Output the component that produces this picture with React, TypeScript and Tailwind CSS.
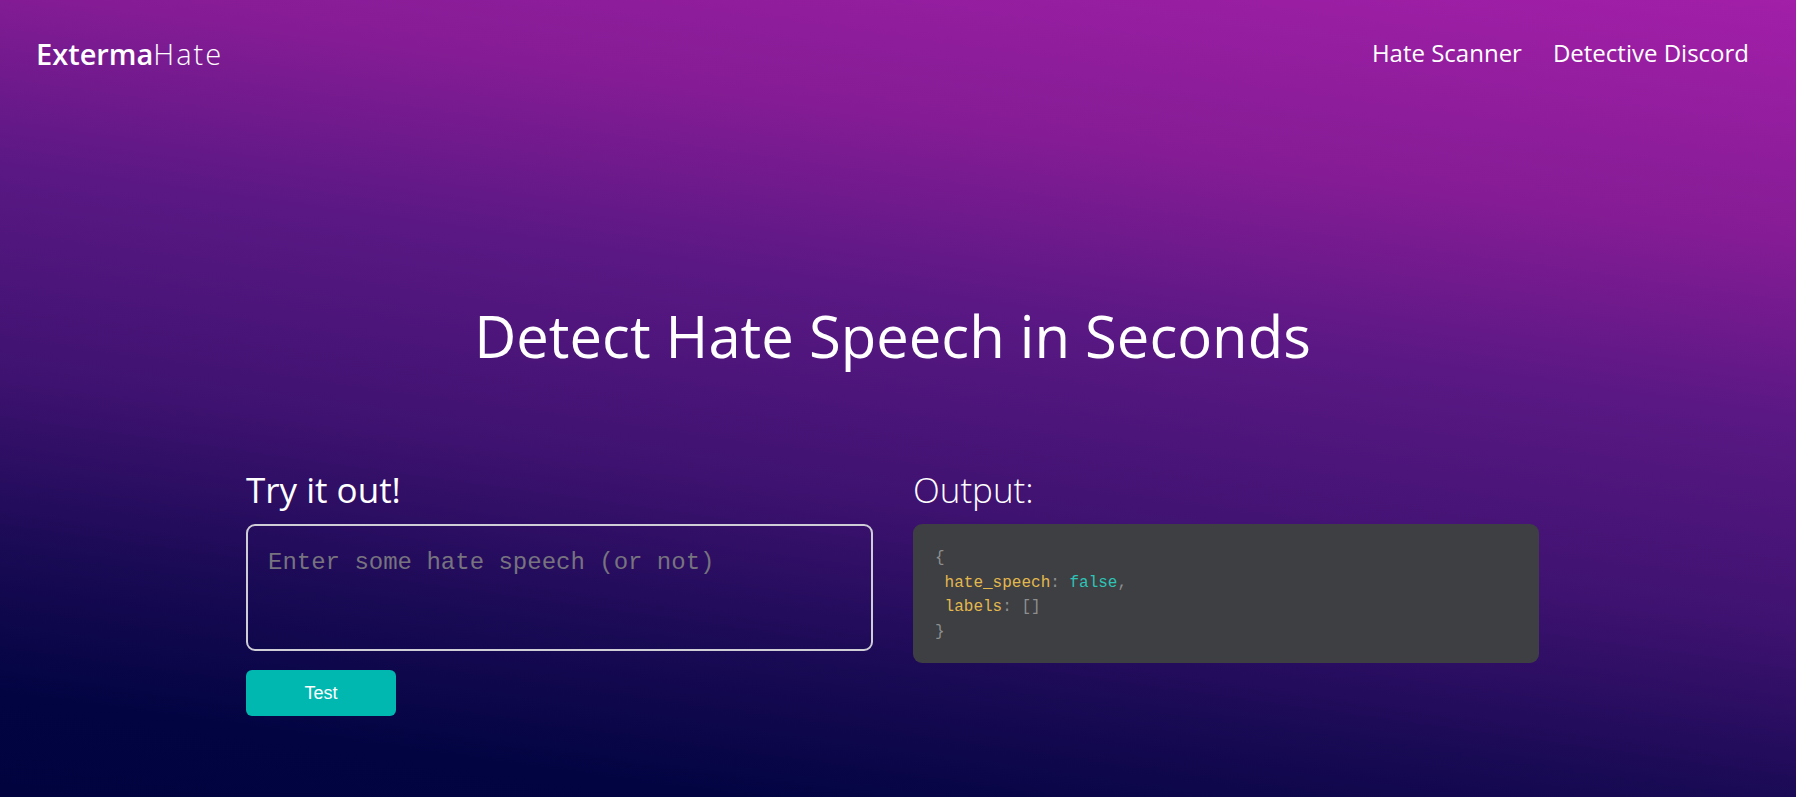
export default function App() {
  return (
    <div className="min-h-[797px] w-full bg-[linear-gradient(8deg,#01033f_0%,#020442_10%,#1a0a55_24%,#3e1270_40%,#5a1884_60%,#851c95_77%,#a21fa8_100%)] font-['Open_Sans',sans-serif] text-white">
      {/* Header */}
      <header className="flex h-[106px] items-center justify-between pl-[36px] pr-[47px]">
        <div className="text-[29px] leading-none">
          <span className="font-semibold">Exterma</span>
          <span className="font-light tracking-[2px]">Hate</span>
        </div>
        <nav className="flex items-center gap-[31px] text-[24px] font-medium">
          <a className="cursor-pointer">Hate Scanner</a>
          <a className="cursor-pointer">Detective Discord</a>
        </nav>
      </header>

      {/* Hero */}
      <div className="w-[1785px]">
        <h1 className="mt-[195px] text-center text-[58px] leading-[70px] font-normal">
          Detect Hate Speech in Seconds
        </h1>

        <div className="mt-[100px] flex gap-[40px] pl-[246px]">
          {/* Input */}
          <div className="w-[627px]">
            <h2 className="text-[35px] leading-[38px]">Try it out!</h2>
            <textarea
              placeholder="Enter some hate speech (or not)"
              className="mt-[15px] block h-[127px] w-full resize-none rounded-[9px] border-2 border-[#cfcdd6] bg-transparent px-[20px] pt-[19px] font-['Liberation_Mono',monospace] text-[24px] text-white outline-none placeholder:text-[#77737f]"
            />
            <button className="mt-[19px] h-[46px] w-[150px] rounded-[6px] bg-[#00b8b0] font-['Liberation_Sans',sans-serif] text-[18px] text-white">
              Test
            </button>
          </div>

          {/* Output */}
          <div className="w-[626px]">
            <h2 className="text-[35px] leading-[38px] font-light">Output:</h2>
            <pre className="mt-[15px] h-[139px] rounded-[9px] bg-[#3d3f43] px-[22px] pt-[22px] font-['Liberation_Mono',monospace] text-[16px] leading-[24.5px] text-[#8e8e8e]">
              <div>{'{'}</div>
              <div>
                {' '}
                <span className="text-[#e4b84d]">hate_speech</span>:{' '}
                <span className="text-[#2ec4b6]">false</span>,
              </div>
              <div>
                {' '}
                <span className="text-[#e4b84d]">labels</span>: []
              </div>
              <div>{'}'}</div>
            </pre>
          </div>
        </div>
      </div>
    </div>
  );
}
